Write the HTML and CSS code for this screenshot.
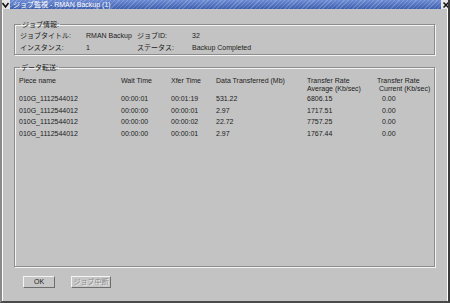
FILE: index.html
```html
<!doctype html>
<html lang="ja">
  <head>
    <meta charset="UTF-8" />
    <title>ジョブ監視 - RMAN Backup (1)</title>
    <link rel="stylesheet" href="styles.css">
  </head>
  <body>
    <div class="window">
      <div class="titlebar">
        <span class="menu-btn">
          <svg width="9" height="8" viewBox="0 0 9 8"><path d="M1.5 2 L4.5 6 L7.5 2" fill="none" stroke="#111" stroke-width="1.6"/></svg>
        </span>
        <span class="title">ジョブ監視 - RMAN Backup (1)</span>
        <span class="close-btn">
          <svg width="8" height="8" viewBox="0 0 8 8"><path d="M1.5 1.5 L6.5 6.5 M6.5 1.5 L1.5 6.5" stroke="#111" stroke-width="1.5"/></svg>
        </span>
      </div>

      <div class="client">
        <fieldset class="group info">
          <legend>ジョブ情報:</legend>
          <div class="info-grid">
            <span>ジョブタイトル:</span><span>RMAN Backup</span>
            <span>ジョブID:</span><span>32</span>
            <span>インスタンス:</span><span>1</span>
            <span>ステータス:</span><span>Backup Completed</span>
          </div>
        </fieldset>

        <fieldset class="group transfer">
          <legend>データ転送:</legend>
          <div class="table">
            <div class="head">Piece name</div>
            <div class="head">Wait Time</div>
            <div class="head">Xfer Time</div>
            <div class="head">Data Transferred (Mb)</div>
            <div class="head">Transfer Rate<br>Average (Kb/sec)</div>
            <div class="head">Transfer Rate<br>&nbsp;Current (Kb/sec)</div>

            <div>010G_1112544012</div><div>00:00:01</div><div>00:01:19</div><div>531.22</div><div>6806.15</div><div class="cur">0.00</div>
            <div>010G_1112544012</div><div>00:00:00</div><div>00:00:01</div><div>2.97</div><div>1717.51</div><div class="cur">0.00</div>
            <div>010G_1112544012</div><div>00:00:00</div><div>00:00:02</div><div>22.72</div><div>7757.25</div><div class="cur">0.00</div>
            <div>010G_1112544012</div><div>00:00:00</div><div>00:00:01</div><div>2.97</div><div>1767.44</div><div class="cur">0.00</div>
          </div>
        </fieldset>

        <div class="buttons">
          <button class="btn ok">OK</button>
          <button class="btn" disabled>ジョブ中断</button>
        </div>
      </div>

      <span class="corner bl"></span>
      <span class="corner br"></span>
    </div>
  </body>
</html>
```

FILE: styles.css
```css
body {
  margin: 0;
  background-color: #c3c3c3;
  font-family: "Liberation Sans", "Noto Sans CJK JP", sans-serif;
  font-size: 7px;
  color: #1c1c1c;
}
.window {
  position: relative;
  width: 450px;
  height: 303px;
  box-sizing: border-box;
  background: #c3c3c3;
  border-left: 2px solid #8a8a8a;
  border-right: 2px solid #3a3a3a;
  border-bottom: 2px solid #4a4a4a;
  overflow: hidden;
}
.titlebar {
  display: flex;
  align-items: center;
  height: 9px;
  margin-left: -2px;
  margin-right: -2px;
  background:
    repeating-linear-gradient(135deg, rgba(255, 255, 255, 0.18) 0 1px, transparent 1px 3px),
    linear-gradient(#6d8bd4, #3d5eae);
  color: #fff;
}
.menu-btn {
  display: flex;
  align-items: center;
  justify-content: center;
  width: 10px;
  height: 9px;
  background: #e6e6e6;
}
.title {
  margin-left: 3px;
  flex: 1;
  line-height: 9px;
  white-space: nowrap;
}
.close-btn {
  display: flex;
  align-items: center;
  justify-content: center;
  width: 9px;
  height: 9px;
  background: #e6e6e6;
}
.client {
  height: 292px;
  border-left: 1px solid #fff;
  border-right: 1px solid #fff;
  box-sizing: border-box;
  padding: 11px 0 0 11px;
}
.group {
  width: 421px;
  box-sizing: border-box;
  margin: 0;
  padding: 0 0 0 5px;
  border: 1px solid #8c8c8c;
  box-shadow: inset 1px 1px 0 #f4f4f4, 1px 1px 0 #f4f4f4;
}
.group legend {
  padding: 0 1px;
  margin-left: 1px;
  line-height: 9px;
}
.info-grid {
  display: grid;
  grid-template-columns: 66px 51px 55px auto;
  line-height: 12px;
  padding-top: 1px;
}
.transfer {
  margin-top: 8px;
  height: 204px;
  padding-left: 4px;
}
.table {
  display: grid;
  grid-template-columns: 102px 50px 45px 91px 70px 60px;
  padding-top: 5px;
  white-space: nowrap;
  overflow: hidden;
  width: 414px;
}
.table div {
  line-height: 11.67px;
}
.table .head {
  line-height: 8px;
}
.table .cur {
  padding-left: 5px;
}
.buttons {
  display: flex;
  gap: 16px;
  margin-top: 9px;
  padding-left: 9px;
}
.btn {
  height: 12px;
  padding: 0;
  font-family: inherit;
  font-size: 7px;
  line-height: 8px;
  color: #1c1c1c;
  background: #c6c6c6;
  border: 1px solid;
  border-color: #f4f4f4 #6e6e6e #6e6e6e #f4f4f4;
}
.btn.ok {
  width: 32px;
}
.btn:disabled {
  width: 40px;
  color: #8a8a8a;
  text-shadow: 1px 1px 0 #efefef;
}
.corner {
  position: absolute;
  bottom: -2px;
  width: 10px;
  height: 10px;
  border-bottom: 2px solid #3c5eb4;
  box-sizing: border-box;
}
.corner.bl {
  left: -2px;
  border-left: 2px solid #3c5eb4;
}
.corner.br {
  right: -2px;
  border-right: 2px solid #3c5eb4;
}
```
